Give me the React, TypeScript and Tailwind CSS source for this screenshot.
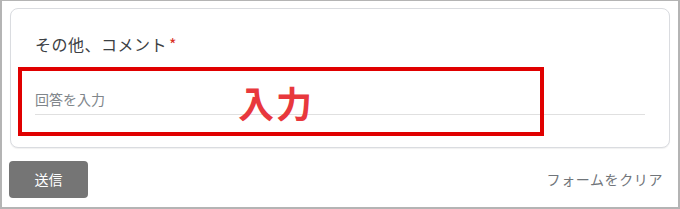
export default function App() {
  const jp = { fontFamily: '"Noto Sans CJK JP", "Noto Sans", sans-serif' }
  return (
    <div
      className="relative w-[680px] h-[209px] border-2 border-t border-[#b4b4b4] bg-white overflow-hidden"
      style={jp}
    >
      {/* question card */}
      <div className="ml-[8px] mt-[7px] w-[660px] h-[140px] rounded-lg border border-[#dadce0] bg-white shadow-[0_1px_1px_rgba(0,0,0,0.06)] px-6 pt-[23px]">
        <div className="flex items-center text-[16px] leading-6 text-[#3c4043] tracking-[0.5px]">
          <span>その他、コメント</span>
          <span className="ml-[2px] text-[#d93025]">*</span>
        </div>
        <div className="mt-[33px] border-b border-[#e0e0e0] pb-[5px] text-[14px] leading-5 text-[#80868b]">
          回答を入力
        </div>
      </div>

      {/* footer */}
      <div className="flex items-center justify-between mt-[13px] pl-[7px] pr-[15px]">
        <button className="w-[79px] h-[37px] rounded bg-[#757575] text-white text-[14px]">
          送信
        </button>
        <span className="text-[14px] text-[#70757a] tracking-[0.6px]">フォームをクリア</span>
      </div>

      {/* annotation overlay */}
      <div className="absolute left-[16px] top-[66px] w-[526px] h-[69px] border-[4px] border-[#e00000]" />
      <div className="absolute left-[236px] top-[77px] text-[36px] leading-[48px] font-bold text-[#e8383d] tracking-[2px]">
        入力
      </div>
    </div>
  )
}
